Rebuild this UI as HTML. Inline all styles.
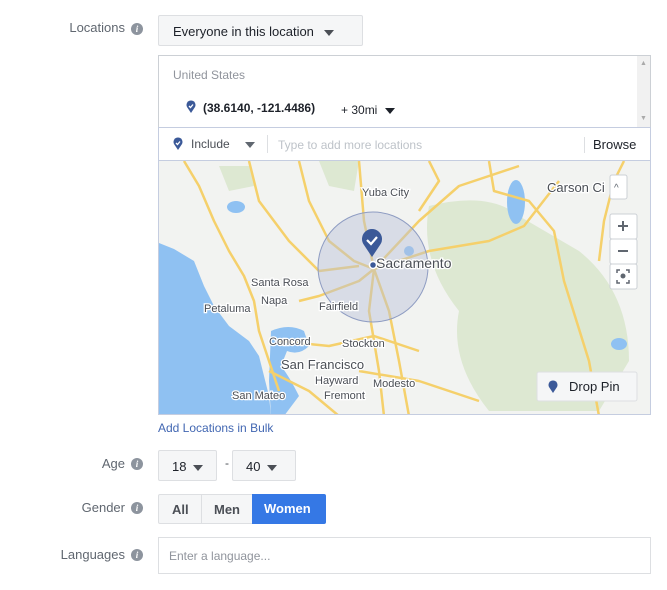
<!DOCTYPE html>
<html><head><meta charset="utf-8"><style>
*{box-sizing:border-box;margin:0;padding:0}
body{width:667px;height:590px;background:#fff;font-family:"Liberation Sans",Arial,sans-serif;position:relative;overflow:hidden;color:#4b4f56}
.a{position:absolute}
.lbl{font-size:13px;color:#606770;text-align:right;width:125px;left:0}
.ic{width:12px;height:12px;border-radius:50%;background:#8d949e;color:#fff;font-size:9px;font-weight:bold;font-style:italic;text-align:center;line-height:12px;font-family:"Liberation Serif",serif}
.btn{background:#f5f6f7;border:1px solid #dddfe2;border-radius:2px;font-size:13px;font-weight:bold;color:#4b4f56}
.dd{font-weight:normal;color:#1d2129}
.car{display:inline-block;width:0;height:0;border-left:5px solid transparent;border-right:5px solid transparent;border-top:6px solid #4b4f56;vertical-align:middle}
</style></head><body>
<div class="a lbl" style="top:20px;">Locations</div><div class="a ic" style="left:131px;top:23px">i</div>
<div class="a btn dd" style="left:158px;top:15px;width:205px;height:31px;padding:8px 0 0 14px">Everyone in this location <span class="car" style="margin-left:6px"></span></div>

<div class="a" style="left:158px;top:55px;width:493px;height:73px;border:1px solid #ccd0d5;border-bottom:none"></div>
<div class="a" style="left:637px;top:56px;width:13px;height:71px;background:#f1f1f1"></div>
<div class="a" style="left:640px;top:60px;font-size:7px;color:#aaa">▲</div>
<div class="a" style="left:640px;top:115px;font-size:7px;color:#aaa">▼</div>
<div class="a" style="left:173px;top:68px;font-size:12px;color:#90949c">United States</div>
<svg class="a" style="left:186px;top:100px" width="10" height="13" viewBox="0 0 10 13"><path d="M5 13L1 7A4.5 4.5 0 1 1 9 7Z" fill="#3b5998"/><path d="M3 6l1.5 1.5L7 4.5" stroke="#fff" stroke-width="1.3" fill="none"/></svg>
<div class="a" style="left:203px;top:101px;font-size:12px;font-weight:bold;color:#1d2129">(38.6140, -121.4486)</div>
<div class="a" style="left:341px;top:103px;font-size:12px;color:#1d2129">+ 30mi <span class="car" style="margin-left:4px;border-top-color:#1d2129"></span></div>

<div class="a" style="left:158px;top:127px;width:493px;height:34px;border:1px solid #c5cde0"></div>
<svg class="a" style="left:173px;top:137px" width="10" height="13" viewBox="0 0 10 13"><path d="M5 13L1 7A4.5 4.5 0 1 1 9 7Z" fill="#3b5998"/><path d="M3 6l1.5 1.5L7 4.5" stroke="#fff" stroke-width="1.3" fill="none"/></svg>
<div class="a" style="left:191px;top:137px;font-size:12px;color:#4b4f56">Include</div>
<span class="a car" style="left:245px;top:142px;border-top-color:#606770"></span>
<div class="a" style="left:267px;top:135px;width:1px;height:18px;background:#dddfe2"></div>
<div class="a" style="left:278px;top:138px;font-size:12px;color:#bec3c9">Type to add more locations</div>
<div class="a" style="left:584px;top:137px;width:1px;height:16px;background:#dddfe2"></div>
<div class="a" style="left:593px;top:137px;font-size:13px;color:#1d2129">Browse</div>

<div class="a" style="left:158px;top:160px;width:493px;height:255px;border:1px solid #c5cde0;overflow:hidden;background:#f2f3f1">
<svg width="493" height="255" viewBox="0 0 493 255" style="display:block">
<g fill="#dde8d2"><path d="M270 45 Q330 30 360 55 L420 90 Q470 130 470 200 L440 250 L330 250 Q290 200 300 150 Q260 100 270 45Z"/><path d="M60 5 L90 5 L95 25 L70 30Z"/><path d="M160 0 L200 0 L195 30 L170 25Z"/></g>
<g fill="#8fc1f2"><path d="M0 82 L15 88 L35 100 L45 125 L55 145 L70 165 L90 180 L100 195 L105 215 L110 235 L112 255 L0 255Z"/><path d="M112 170 Q130 162 145 170 L150 185 Q140 195 128 190 L122 205 Q130 215 140 235 L125 255 L112 255 L110 220Z"/><ellipse cx="357" cy="41" rx="9" ry="22"/><ellipse cx="77" cy="46" rx="9" ry="6"/><ellipse cx="460" cy="183" rx="8" ry="6"/><ellipse cx="250" cy="90" rx="5" ry="5"/></g>
<g stroke="#f5d06b" stroke-width="2.5" fill="none" stroke-linejoin="round">
<path d="M25 0 L40 25 L55 60 L70 90 L85 115 L95 140 L100 170 L110 200 L120 230"/>
<path d="M90 0 L100 40 L130 80 L160 110 L200 105"/>
<path d="M140 0 L150 40 L170 80 L195 100 L215 108 L230 150 L240 200 L250 255"/>
<path d="M200 0 L205 60 L215 108 L210 150 L220 210 L225 255"/>
<path d="M215 108 L260 60 L300 25 L360 5"/>
<path d="M215 108 L270 90 L330 80 L365 65 L400 20"/>
<path d="M330 0 L335 30 L370 40 L395 70 L405 120 L430 200 L440 255"/>
<path d="M465 0 L455 20 L445 60 L440 100"/>
<path d="M140 140 L160 135 L200 120 L215 108"/>
<path d="M120 180 L170 185 L215 175 L260 190"/>
<path d="M200 210 L260 220 L320 240"/>
<path d="M110 210 L150 230 L180 255"/>
<path d="M270 0 L280 20 L260 50"/>
</g>
<circle cx="214" cy="106" r="55" fill="#b8c1d9" fill-opacity="0.45" stroke="#8e9cc2" stroke-width="1"/>
<g font-family="Liberation Sans,Arial,sans-serif" fill="#4b4f56" stroke="#fff" stroke-width="2.5" paint-order="stroke">
<text x="203" y="35" font-size="11">Yuba City</text>
<text x="388" y="31" font-size="13">Carson Ci</text>
<text x="217" y="107" font-size="14">Sacramento</text>
<text x="92" y="125" font-size="11">Santa Rosa</text>
<text x="102" y="143" font-size="11">Napa</text>
<text x="45" y="151" font-size="11">Petaluma</text>
<text x="160" y="149" font-size="11">Fairfield</text>
<text x="110" y="184" font-size="11">Concord</text>
<text x="183" y="186" font-size="11">Stockton</text>
<text x="122" y="208" font-size="13">San Francisco</text>
<text x="156" y="223" font-size="11">Hayward</text>
<text x="214" y="226" font-size="11">Modesto</text>
<text x="165" y="238" font-size="11">Fremont</text>
<text x="73" y="238" font-size="11">San Mateo</text>
</g>
<path d="M213 96 L205 84 A10 10 0 1 1 221 84Z" fill="#3b5998"/>
<path d="M208 79 l4 4 l6 -7" stroke="#fff" stroke-width="2.2" fill="none"/>
<circle cx="214" cy="104" r="3.5" fill="#3b5998" stroke="#fff" stroke-width="1.5"/>
<rect x="451" y="14" width="17" height="24" rx="2" fill="#fff" stroke="#ccd0d5"/><text x="455" y="30" font-size="10" fill="#606770">^</text>
<rect x="451" y="53" width="27" height="25" rx="2" fill="#fff" stroke="#ccd0d5"/><path d="M459 65h10M464 60v10" stroke="#606770" stroke-width="2"/>
<rect x="451" y="78" width="27" height="25" rx="2" fill="#fff" stroke="#ccd0d5"/><path d="M459 90h10" stroke="#606770" stroke-width="2"/>
<rect x="451" y="103" width="27" height="25" rx="2" fill="#fff" stroke="#ccd0d5"/><path d="M458 112v-3h3M467 109h3v3M470 119v3h-3M461 122h-3v-3" stroke="#606770" stroke-width="1.5" fill="none"/><circle cx="464" cy="115" r="2.5" fill="#606770"/>
<rect x="378" y="211" width="100" height="29" rx="2" fill="#f5f6f7" stroke="#dddfe2"/>
<path d="M394 232 L390 226 A4.5 4.5 0 1 1 398 226Z" fill="#3b5998"/>
<text x="410" y="230" font-family="Liberation Sans,Arial,sans-serif" font-size="13" fill="#1d2129">Drop Pin</text>
</svg></div>

<div class="a" style="left:158px;top:421px;font-size:12px;color:#4267b2">Add Locations in Bulk</div>

<div class="a lbl" style="top:456px">Age</div><div class="a ic" style="left:131px;top:458px">i</div>
<div class="a btn dd" style="left:158px;top:450px;width:59px;height:31px;padding:8px 0 0 13px">18 <span class="car" style="margin-left:3px"></span></div>
<div class="a" style="left:225px;top:456px;font-size:12px">-</div>
<div class="a btn dd" style="left:232px;top:450px;width:64px;height:31px;padding:8px 0 0 13px">40 <span class="car" style="margin-left:3px"></span></div>

<div class="a lbl" style="top:500px;">Gender</div><div class="a ic" style="left:131px;top:502px">i</div>
<div class="a btn" style="left:158px;top:494px;width:44px;height:30px;padding:7px 0 0 13px;border-radius:2px 0 0 2px">All</div>
<div class="a btn" style="left:201px;top:494px;width:52px;height:30px;padding:7px 0 0 12px;border-radius:0">Men</div>
<div class="a" style="left:252px;top:494px;width:74px;height:30px;background:#3578e5;color:#fff;font-size:13px;font-weight:bold;padding:7px 0 0 12px;border-radius:0 2px 2px 0">Women</div>

<div class="a lbl" style="top:547px;">Languages</div><div class="a ic" style="left:131px;top:549px">i</div>
<div class="a" style="left:158px;top:537px;width:493px;height:37px;border:1px solid #dddfe2;font-size:12px;color:#90949c;padding:11px 0 0 10px">Enter a language...</div>
</body></html>
